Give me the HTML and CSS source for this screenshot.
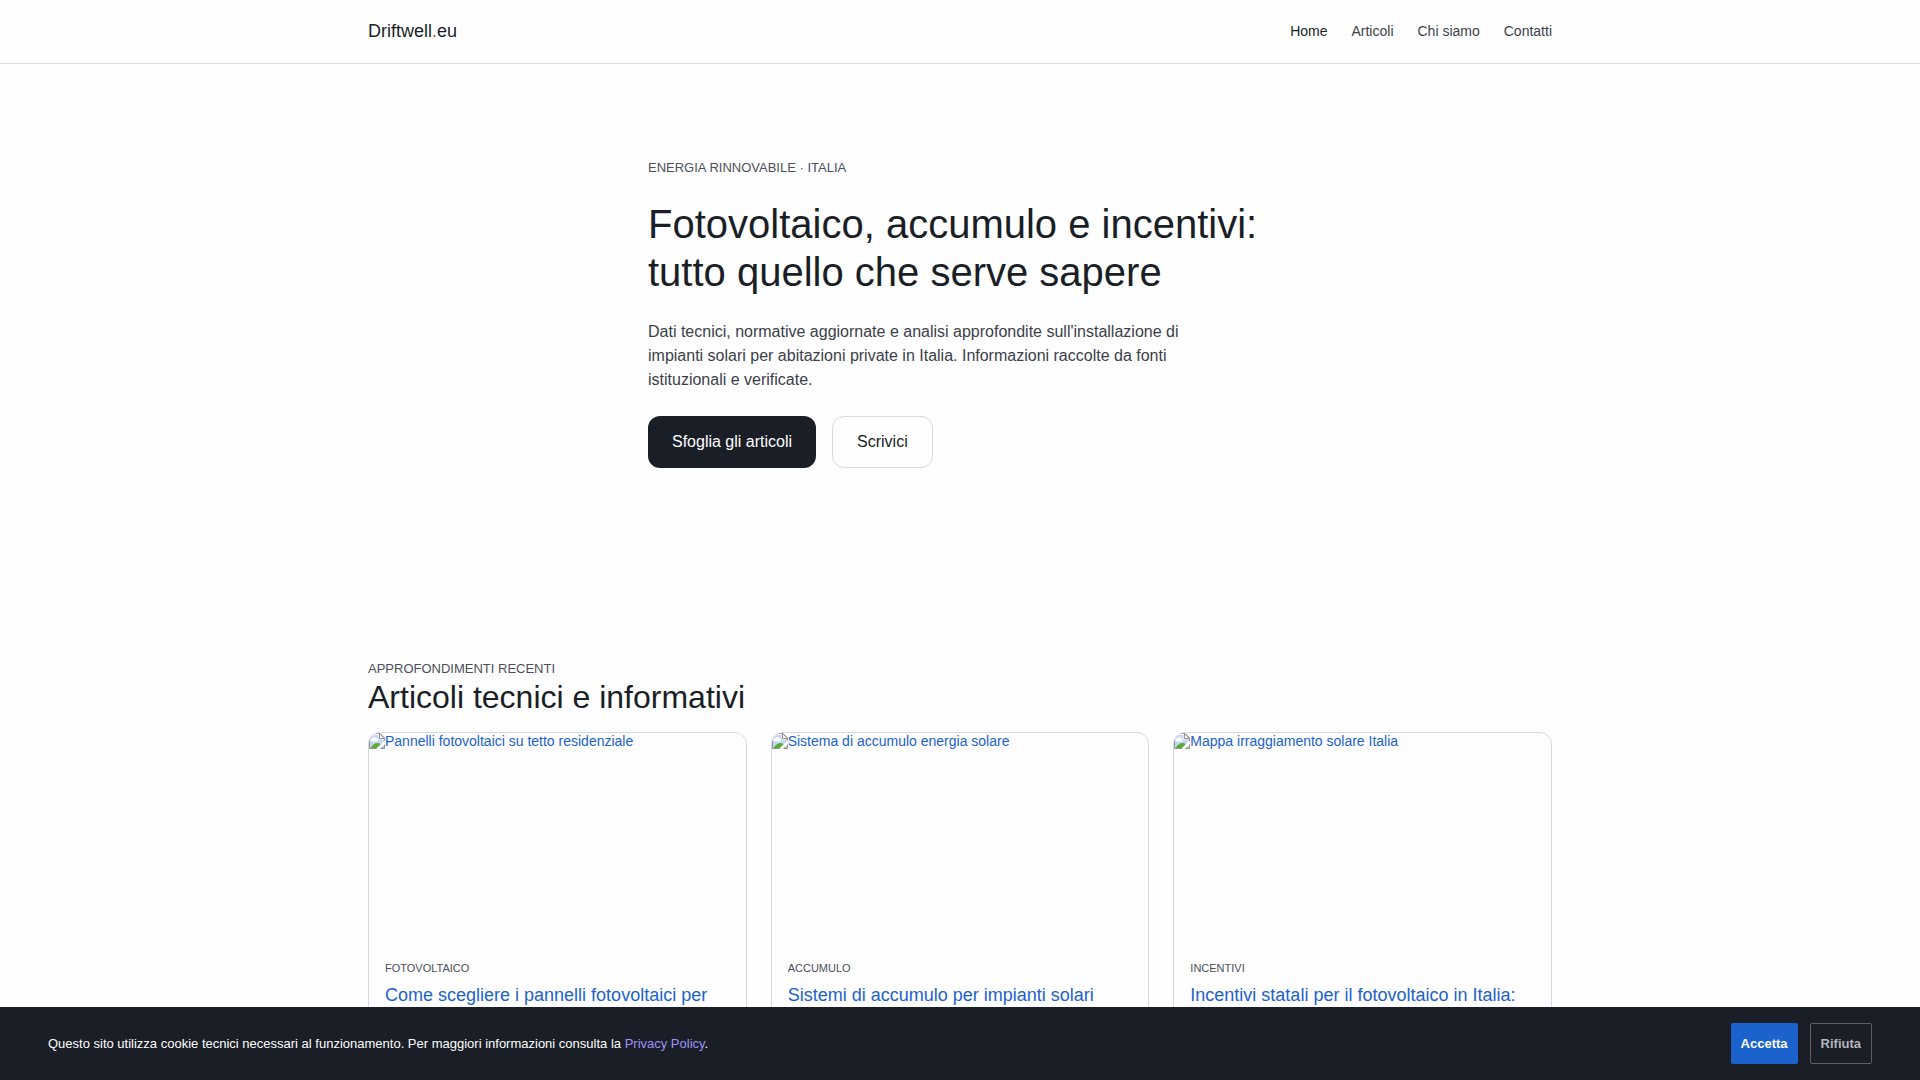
FILE: index.html
```html
<!DOCTYPE html>
<html lang="it">
<head>
    <meta charset="UTF-8">
    <meta name="viewport" content="width=device-width, initial-scale=1.0">
    <title>Driftwell.eu</title>
    <link rel="stylesheet" href="styles.css">
</head>
<body>
    <!-- placeholder icon for card pictures -->
    <svg class="sprite" aria-hidden="true">
        <symbol id="icon-image" viewBox="0 0 16 16">
            <path d="M.5 .5H11L15.500 5V15.500H.5z" fill="#c4d5f5" stroke="#909090"/>
            <path d="M1.500 1.500H10V6h5" fill="none" stroke="#fff"/>
            <path d="M3 8.500a1.500 1.500 0 0 1 .3-3 2.200 2.200 0 0 1 4.200 0 1.500 1.500 0 0 1 .5 3z" fill="#fff"/>
            <path d="M1.500 15c2-3.500 4.500-5 7-5 2.500 0 4.500 1.500 5.500 5z" fill="#5bac36"/>
            <path d="M10.500 .5v5h5z" fill="#fff" stroke="#909090"/>
            <path d="M16.500 8.500L8.500 16.500" stroke="#fff" stroke-width="3"/>
        </symbol>
    </svg>

    <header class="header">
        <div class="container header-inner">
            <a href="#" class="logo">Driftwell<span>.</span>eu</a>
            <nav class="nav">
                <a href="#" class="active">Home</a>
                <a href="#articoli">Articoli</a>
                <a href="#chi-siamo">Chi siamo</a>
                <a href="#contatti">Contatti</a>
            </nav>
        </div>
    </header>

    <main>
        <section class="hero">
            <p class="eyebrow">Energia rinnovabile · Italia</p>
            <h1>Fotovoltaico, accumulo e incentivi: tutto quello che serve sapere</h1>
            <p class="hero-text">Dati tecnici, normative aggiornate e analisi approfondite sull'installazione di impianti solari per abitazioni private in Italia. Informazioni raccolte da fonti istituzionali e verificate.</p>
            <div class="hero-actions">
                <a href="#articoli" class="btn btn-primary">Sfoglia gli articoli</a>
                <a href="#contatti" class="btn btn-outline">Scrivici</a>
            </div>
        </section>

        <section class="container articles" id="articoli">
            <p class="eyebrow">Approfondimenti recenti</p>
            <h2>Articoli tecnici e informativi</h2>
            <div class="cards">
                <a href="#" class="card">
                    <div class="card-image">
                        <svg class="icon"><use href="#icon-image"/></svg>
                        <span>Pannelli fotovoltaici su tetto residenziale</span>
                    </div>
                    <div class="card-body">
                        <p class="card-tag">Fotovoltaico</p>
                        <h3>Come scegliere i pannelli fotovoltaici per</h3>
                    </div>
                </a>
                <a href="#" class="card">
                    <div class="card-image">
                        <svg class="icon"><use href="#icon-image"/></svg>
                        <span>Sistema di accumulo energia solare</span>
                    </div>
                    <div class="card-body">
                        <p class="card-tag">Accumulo</p>
                        <h3>Sistemi di accumulo per impianti solari</h3>
                    </div>
                </a>
                <a href="#" class="card">
                    <div class="card-image">
                        <svg class="icon"><use href="#icon-image"/></svg>
                        <span>Mappa irraggiamento solare Italia</span>
                    </div>
                    <div class="card-body">
                        <p class="card-tag">Incentivi</p>
                        <h3>Incentivi statali per il fotovoltaico in Italia:</h3>
                    </div>
                </a>
            </div>
        </section>
    </main>

    <div class="cookie-banner">
        <p>Questo sito utilizza cookie tecnici necessari al funzionamento. Per maggiori informazioni consulta la <a href="#privacy">Privacy Policy</a>.</p>
        <div class="cookie-actions">
            <button type="button" class="cookie-accept">Accetta</button>
            <button type="button" class="cookie-reject">Rifiuta</button>
        </div>
    </div>
</body>
</html>
```

FILE: styles.css
```css
* {
    box-sizing: border-box;
    margin: 0;
    padding: 0;
}

body {
    font-family: "Liberation Sans", Arial, sans-serif;
    font-size: 16px;
    line-height: 24px;
    color: #1a1e26;
    background-color: #fefefe;
}

a {
    color: #1c62cc;
    text-decoration: none;
}

h1,
h2,
h3 {
    font-weight: 400;
}

.sprite {
    display: none;
}

.container {
    max-width: 1232px;
    margin: 0 auto;
    padding: 0 24px;
}

/* Header */
.header {
    border-bottom: 1px solid #d9dadc;
}

.header-inner {
    display: flex;
    justify-content: space-between;
    align-items: center;
    padding-top: 19px;
    padding-bottom: 20px;
}

.logo {
    font-size: 18px;
    color: #1a1e26;
}

.logo span {
    color: #d9480f;
}

.nav {
    display: flex;
    gap: 24px;
    font-size: 14px;
}

.nav a {
    color: #3b3f4a;
}

.nav a.active {
    color: #1a1e26;
}

/* Hero */
.hero {
    max-width: 672px;
    margin: 0 auto;
    padding: 96px 24px;
}

.eyebrow {
    font-size: 13px;
    line-height: 16px;
    text-transform: uppercase;
    color: #4b4f59;
}

.hero h1 {
    margin: 24px 0;
    font-size: 40px;
    line-height: 48px;
}

.hero-text {
    max-width: 560px;
    color: #3b3f4a;
}

.hero-actions {
    display: flex;
    gap: 16px;
    margin-top: 24px;
}

.btn {
    padding: 14px 24px;
    border-radius: 12px;
}

.btn-primary {
    background-color: #1a1e26;
    color: #fefefe;
}

.btn-outline {
    padding: 13px 24px;
    border: 1px solid #d9dadc;
    color: #1a1e26;
}

/* Articles */
.articles {
    padding-top: 96px;
    padding-bottom: 55px;
}

.articles .eyebrow {
    line-height: 18px;
}

.articles h2 {
    margin-bottom: 16px;
    font-size: 32px;
    line-height: 38px;
}

.cards {
    display: grid;
    grid-template-columns: repeat(3, 1fr);
    gap: 24px;
}

.card {
    border: 1px solid #d9dadc;
    border-radius: 12px;
    overflow: hidden;
}

.card-image {
    display: flex;
    aspect-ratio: 16 / 9;
    font-size: 14px;
    line-height: 16px;
}

.icon {
    width: 16px;
    height: 16px;
}

.card-body {
    padding: 16px;
}

.card-tag {
    margin-bottom: 8px;
    font-size: 11px;
    line-height: 14px;
    text-transform: uppercase;
    color: #4b4f59;
}

.card h3 {
    font-size: 18px;
    line-height: 24px;
}

/* Cookie banner */
.cookie-banner {
    position: fixed;
    left: 0;
    right: 0;
    bottom: 0;
    display: flex;
    justify-content: space-between;
    align-items: center;
    gap: 24px;
    padding: 16px 48px;
    background-color: #1a1e26;
    color: #fefefe;
    font-size: 13px;
}

.cookie-banner p a {
    color: #9c92f8;
}

.cookie-actions {
    display: flex;
    gap: 12px;
}

.cookie-actions button {
    padding: 12px 10px;
    border: 0;
    border-radius: 2px;
    font-family: inherit;
    font-size: 13px;
    font-weight: 700;
    cursor: pointer;
}

.cookie-accept {
    background-color: #1c62cc;
    color: #fefefe;
}

.cookie-actions .cookie-reject {
    background-color: transparent;
    border: 1px solid #5c5f68;
    color: #b4b5b9;
}
```
